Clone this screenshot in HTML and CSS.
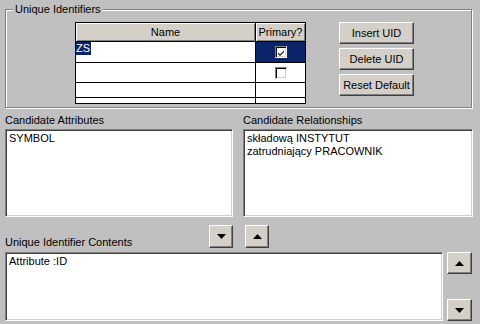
FILE: index.html
```html
<!DOCTYPE html>
<html>
<head>
<meta charset="utf-8">
<link rel="stylesheet" href="styles.css">
</head>
<body>
<div class="dialog">
  <fieldset class="group">
    <legend>Unique Identifiers</legend>
    <div class="uid-row">
      <div class="grid">
        <div class="hcell">Name</div>
        <div class="hcell">Primary?</div>
        <div class="cell r1"><span class="sel">ZS</span></div>
        <div class="cell r1 chk selcell"><span class="checkbox"><svg width="8" height="8" viewBox="0 0 8 8"><path d="M1 3.5 L3 5.5 L7 1.5 L7 3 L3 7 L1 5 Z" fill="#000"/></svg></span></div>
        <div class="cell r2"></div>
        <div class="cell r2 chk"><span class="checkbox"></span></div>
        <div class="cell r3"></div>
        <div class="cell r3"></div>
        <div class="cell r4"></div>
        <div class="cell r4"></div>
      </div>
      <div class="btns">
        <button class="btn">Insert UID</button>
        <button class="btn">Delete UID</button>
        <button class="btn">Reset Default</button>
      </div>
    </div>
  </fieldset>

  <div class="candidates">
    <div class="col">
      <div class="label">Candidate Attributes</div>
      <div class="listbox cand">
        <div>SYMBOL</div>
      </div>
    </div>
    <div class="col">
      <div class="label">Candidate Relationships</div>
      <div class="listbox cand">
        <div>składową INSTYTUT</div>
        <div>zatrudniający PRACOWNIK</div>
      </div>
    </div>
  </div>

  <div class="contents-head">
    <div class="head-left">
      <span class="label">Unique Identifier Contents</span>
      <button class="arrow"><svg width="9" height="5" viewBox="0 0 9 5"><path d="M0 0 H9 L4.5 5 Z" fill="#000"/></svg></button>
    </div>
    <div class="head-right">
      <button class="arrow up-mid"><svg width="9" height="5" viewBox="0 0 9 5"><path d="M0 5 H9 L4.5 0 Z" fill="#000"/></svg></button>
    </div>
  </div>

  <div class="contents">
    <div class="listbox big">
      <div>Attribute :ID</div>
    </div>
    <div class="side">
      <button class="arrow side-btn"><svg width="9" height="5" viewBox="0 0 9 5"><path d="M0 5 H9 L4.5 0 Z" fill="#000"/></svg></button>
      <button class="arrow side-btn"><svg width="9" height="5" viewBox="0 0 9 5"><path d="M0 0 H9 L4.5 5 Z" fill="#000"/></svg></button>
    </div>
  </div>
</div>
</body>
</html>
```

FILE: styles.css
```css
* { box-sizing: border-box; }

body {
  margin: 0;
  background: #c0c0c0;
  font: 11px/13px "Liberation Sans", Arial, sans-serif;
  color: #000;
}

.dialog {
  padding: 3px 0 0 5px;
  width: 473px;
}

.group {
  margin: 0;
  padding: 0;
  width: 467px;
  border: 1px solid #808080;
  box-shadow: inset 1px 1px 0 #fff, 1px 1px 0 #fff;
  min-inline-size: 0;
}

.group legend {
  margin-left: 7px;
  padding: 0 2px;
  background: #c0c0c0;
  line-height: 13px;
}

.uid-row {
  display: flex;
  align-items: flex-start;
  padding: 6px 0 3px 69px;
}

.grid {
  display: grid;
  grid-template-columns: 180px 50px;
  grid-template-rows: 19px 21px 20px 15px 6px;
  border-left: 1px solid #000;
  border-top: 1px solid #000;
  background: #fff;
}

.hcell, .cell {
  border-right: 1px solid #000;
  border-bottom: 1px solid #000;
}

.hcell {
  background: #d4d0c8;
  box-shadow: inset 1px 1px 0 #fff, inset -1px -1px 0 #808080;
  text-align: center;
  padding-top: 3px;
}

.cell { display: flex; align-items: flex-start; }

.sel {
  background: #0a246a;
  color: #fff;
  padding: 0 1px 0 0;
  line-height: 13px;
}

.chk { align-items: center; justify-content: center; }
.selcell { background: #0a246a; }

.checkbox {
  width: 12px;
  height: 12px;
  background: #fff;
  border: 1px solid;
  border-color: #808080 #fff #fff #808080;
  box-shadow: inset 1px 1px 0 #000, inset -1px -1px 0 #d4d0c8;
  display: flex;
  align-items: center;
  justify-content: center;
  padding: 1px 0 0 1px;
}

.checkbox svg { display: block; }

.btns {
  display: flex;
  flex-direction: column;
  gap: 4px;
  margin-left: 33px;
}

.btn, .arrow {
  font: inherit;
  color: #000;
  background: #d4d0c8;
  border: 1px solid;
  border-color: #fff #404040 #404040 #fff;
  box-shadow: inset -1px -1px 0 #808080;
  padding: 0;
  margin: 0;
  border-radius: 0;
}

.btn {
  width: 75px;
  height: 22px;
}

.candidates {
  display: grid;
  grid-template-columns: 228px 230px;
  column-gap: 10px;
  margin-top: 6px;
}

.label { display: block; }

.listbox {
  background: #fff;
  border: 1px solid;
  border-color: #808080 #fff #fff #808080;
  box-shadow: inset 1px 1px 0 #404040, inset -1px -1px 0 #d4d0c8;
  padding: 2px 3px;
}

.cand {
  margin-top: 2px;
  height: 88px;
}

.contents-head {
  display: grid;
  grid-template-columns: 228px 230px;
  column-gap: 10px;
  margin-top: 8px;
  height: 24px;
}

.head-left {
  display: flex;
  justify-content: space-between;
  align-items: flex-start;
}

.head-left .label { align-self: flex-end; }

.arrow {
  width: 24px;
  height: 23px;
  display: flex;
  align-items: center;
  justify-content: center;
}

.arrow svg { display: block; }

.up-mid { margin-left: 2px; }

.contents {
  display: flex;
  gap: 4px;
  margin-top: 3px;
}

.big {
  width: 438px;
  height: 69px;
}

.side {
  display: flex;
  flex-direction: column;
  justify-content: space-between;
  height: 69px;
}

.side-btn {
  width: 25px;
  height: 22px;
}
```
